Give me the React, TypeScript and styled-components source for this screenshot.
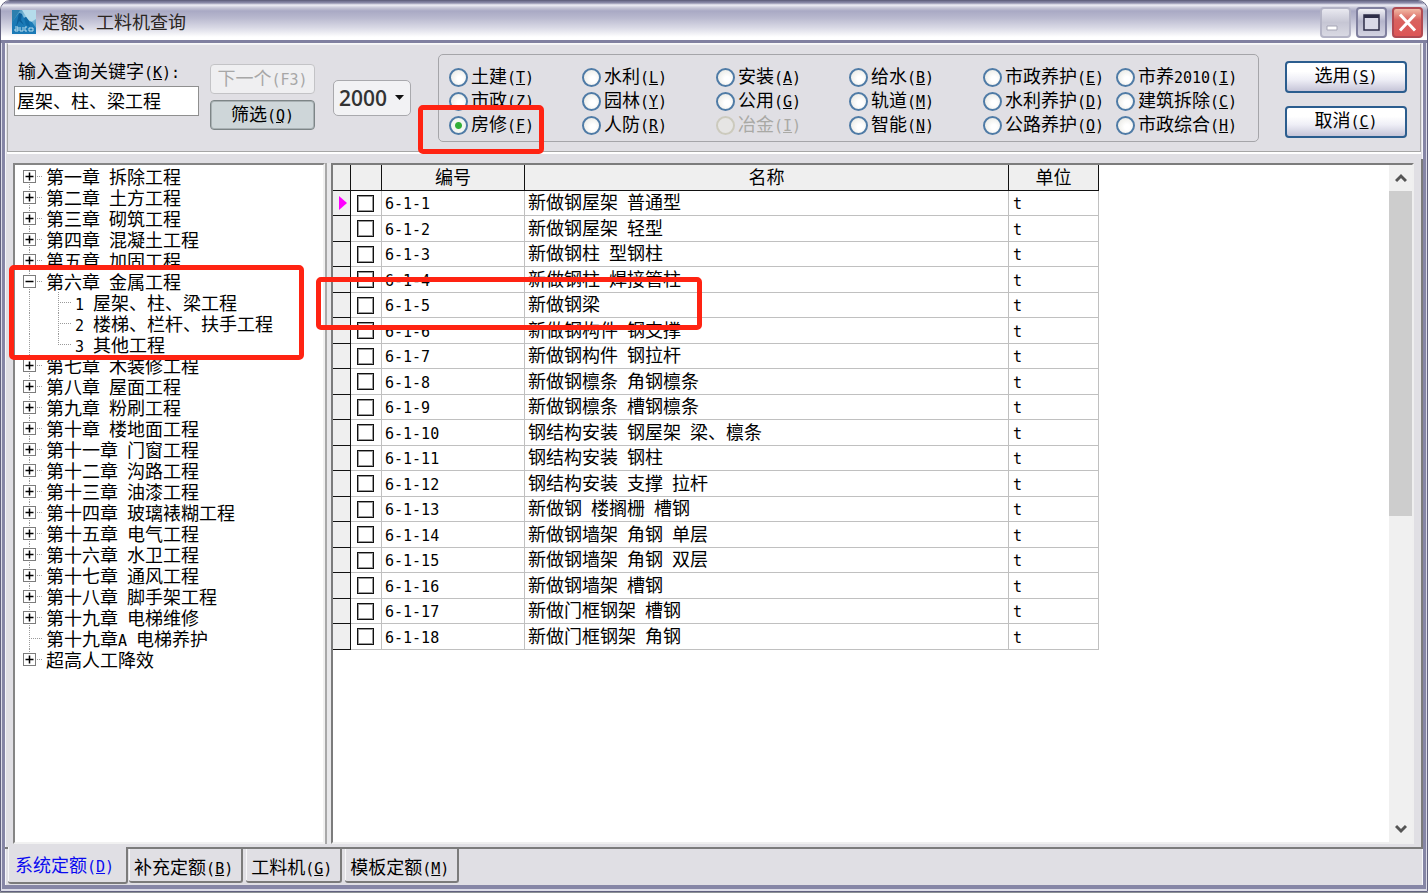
import React, { useState } from 'react';
import styled, { createGlobalStyle, css } from 'styled-components';

const GlobalStyle = createGlobalStyle`
  *, *::before, *::after { box-sizing: border-box; }
  body { margin: 0; background: #ffffff; }
  button, input, select { font: inherit; color: inherit; margin: 0; }
`;

const cjk = "'Liberation Mono', 'Noto Sans CJK SC', monospace";
const dots = '#9a9a9a';

/* ---------- text helpers ---------- */

const Text = styled.span`
  display: inline-block;
  padding-top: 3px;
  white-space: nowrap;
`;

const Half = styled.span`
  font-family: 'DejaVu Sans Mono', monospace;
  font-size: 15px;
  line-height: 15px;
  white-space: pre;
`;

/* Latin runs are set half as wide as the Chinese ones; "&X" underlines an access key. */
function Label({ text }: { text: string }) {
  const runs = text.match(/[\x20-\x7e]+|[^\x20-\x7e]+/g) ?? [];
  return (
    <Text>
      {runs.map((run, i) => {
        if (run.charCodeAt(0) > 0x7e) return <React.Fragment key={i}>{run}</React.Fragment>;
        const at = run.indexOf('&');
        if (at < 0) return <Half key={i}>{run}</Half>;
        return (
          <Half key={i}>
            {run.slice(0, at)}
            <u>{run[at + 1]}</u>
            {run.slice(at + 2)}
          </Half>
        );
      })}
    </Text>
  );
}

/* ---------- window frame ---------- */

const Page = styled.div`
  position: relative;
  display: flex;
  flex-direction: column;
  min-height: 100vh;
  font-family: ${cjk};
  font-size: 18px;
  line-height: 21px;
  color: #000;
`;

const Window = styled.main`
  flex: 1;
  display: flex;
  flex-direction: column;
  border: 1px solid #62627f;
  border-radius: 10px 10px 0 0;
  background: #dcdce8;
  overflow: hidden;
`;

const Desk = styled.div`
  height: 1px;
  background: #8d9196;
`;

const TitleBar = styled.header`
  display: flex;
  align-items: center;
  gap: 6px;
  height: 42px;
  padding: 3px 4px 0 11px;
  border-bottom: 3px solid #8080a0;
  background: linear-gradient(#6e6e8e 0, #8f8fac 2px, #eeeef6 4px, #c4c4d6 7px, #a9a9c4 10px, #b9b9cf 17px, #dadae6 27px, #ffffff 36px, #ffffff 39px);
`;

const Title = styled.h1`
  flex: 1;
  margin: 0;
  padding-top: 5px;
  font-size: 18px;
  font-weight: 400;
  line-height: 21px;
  color: #2b2622;
`;

const Controls = styled.div`
  display: flex;
  gap: 5px;
`;

const ControlButton = styled.button<{ $kind: 'min' | 'max' | 'close' }>`
  display: grid;
  place-items: center;
  width: 31px;
  height: 31px;
  padding: 0;
  border: 2px solid #7f7f9e;
  border-radius: 4px;
  background: linear-gradient(#f1f1f6, #b5b5cb 45%, #d4d4e2);
  ${(p) => p.$kind === 'min' && css`
    border-color: #b4b4c6;
    background: linear-gradient(#e9e9f0, #c6c6d4 50%, #d9d9e3);
  `}
  ${(p) => p.$kind === 'close' && css`
    border-color: #b04a52;
    background: linear-gradient(#f2b9a4, #d9635f 40%, #dd5555);
  `}
`;

const Body = styled.div`
  flex: 1;
  display: flex;
  flex-direction: column;
  margin: 0 1px 2px;
  border: solid #8686a6;
  border-width: 0 3px 4px;
  background: #e0dfe4;
  box-shadow: inset 1px 0 #f6f6fa, inset -1px 0 #f6f6fa;
`;

/* ---------- query panel ---------- */

const QueryPanel = styled.form`
  display: flex;
  align-items: flex-start;
  height: 109px;
  margin: 0 2px;
  padding: 10px 13px 0 6px;
  border: 1px solid #a6a6a6;
  border-top-color: #f8f8f8;
  box-shadow: inset 0 1px #f2f2f4, 0 2px #ffffff;
`;

const Keyword = styled.div`
  display: flex;
  flex-direction: column;
  width: 185px;
  margin-top: 6px;
`;

const KeywordLabel = styled.label`
  height: 21px;
  padding-left: 4px;
  margin-bottom: 5px;
`;

const KeywordInput = styled.input`
  width: 100%;
  height: 30px;
  padding: 0 2px 2px;
  border: 1px solid #8f8f8f;
  background: #fff;
  outline: 0;
`;

const Stack = styled.div`
  display: flex;
  flex-direction: column;
  gap: 6px;
  margin: 10px 0 0 11px;
`;

const ToolButton = styled.button`
  width: 105px;
  height: 30px;
  padding: 0;
  border: 1px solid #7d8587;
  border-radius: 4px;
  background: #ced6d9;
  box-shadow: inset 0 0 0 1px #a9b1b4;
  &:disabled {
    border-color: #c3c3c6;
    background: #efeff1;
    box-shadow: none;
    color: #a7a7a7;
  }
`;

const YearBox = styled.div`
  position: relative;
  width: 78px;
  margin: 26px 0 0 18px;
  svg { position: absolute; right: 7px; top: 15px; pointer-events: none; }
`;

const YearSelect = styled.select`
  display: block;
  appearance: none;
  width: 100%;
  height: 36px;
  padding: 0 0 0 5px;
  border: 1px solid #a9a9ad;
  border-radius: 5px;
  background: #f2f2f4;
  font-family: 'Open Sans', sans-serif;
  font-size: 21px;
  font-weight: 600;
  color: #333;
`;

const Group = styled.fieldset`
  display: grid;
  grid-template-columns: repeat(3, 133px 134px);
  grid-auto-rows: 24px;
  width: 821px;
  height: 88px;
  min-width: 0;
  margin: 0 0 0 27px;
  padding: 10px 0 0 10px;
  border: 1px solid #a5a5a9;
  border-radius: 5px;
`;

const Choice = styled.label<{ $off?: boolean }>`
  display: flex;
  align-items: center;
  gap: 3px;
  white-space: nowrap;
  color: ${(p) => (p.$off ? '#a9a9a5' : '#000')};
`;

const Radio = styled.input`
  appearance: none;
  width: 19px;
  height: 19px;
  flex: none;
  border: 2px solid #4f7ba6;
  border-radius: 50%;
  background: radial-gradient(circle at 60% 60%, #ffffff 20%, #e4e4de 100%);
  &:checked {
    background: radial-gradient(circle, #2fae35 0, #35b03a 3px, #f3f6f1 4px, #f5f5f2 100%);
  }
  &:disabled {
    border-color: #cccabd;
    background: #e6e5e4;
  }
`;

const Actions = styled.div`
  display: flex;
  flex-direction: column;
  gap: 13px;
  margin: 7px 0 0 auto;
`;

const ActionButton = styled.button`
  width: 122px;
  height: 32px;
  padding: 0 0 3px;
  border: 2px solid #2b5d8e;
  border-radius: 4px;
  background: linear-gradient(#ffffff 30%, #eeeef6 60%, #c6c5d8);
`;

/* ---------- tab page: tree and grid ---------- */

const Workspace = styled.section`
  flex: 1;
  display: flex;
  margin-top: 7px;
  padding: 4px 7px 3px 8px;
  border: solid #7b7b7b;
  border-width: 0 2px 2px 0;
`;

const TreePane = styled.nav`
  width: 312px;
  border: solid #f1f1f1;
  border-width: 2px;
  border-top-color: #858585;
  border-left-color: #858585;
  background: #fff;
`;

const Splitter = styled.div`
  width: 6px;
  border: solid #a8a8a8;
  border-width: 0 0 0 2px;
  background: #e8e8ea;
`;

const Tree = styled.ul`
  margin: 0;
  padding: 1px 0 0;
  list-style: none;
`;

const Node = styled.li`
  display: flex;
  height: 21px;
  white-space: nowrap;
`;

const Trunk = styled.span<{ $from: number; $length: number }>`
  flex: none;
  display: flex;
  align-items: center;
  width: 31px;
  padding-left: 8px;
  background:
    repeating-linear-gradient(${dots} 0 1px, transparent 1px 2px) 14px ${(p) => p.$from}px / 1px ${(p) => p.$length}px no-repeat,
    repeating-linear-gradient(90deg, ${dots} 0 1px, transparent 1px 2px) 14px 10px / 14px 1px no-repeat;
`;

const Branch = styled(Trunk)`
  width: 29px;
  background-position: 12px 0, 12px 10px;
`;

const PlainTrunk = styled(Trunk)`
  background-size: 1px 21px, 0 0;
`;

const Toggle = styled.button`
  display: grid;
  place-items: center;
  width: 13px;
  height: 13px;
  padding: 0;
  border: 1px solid #7c7c7c;
  background: #fff;
`;

const GridPane = styled.div`
  flex: 1;
  display: flex;
  min-width: 0;
  border: 2px solid #efefef;
  border-top-color: #7c7c7c;
  border-left-color: #7c7c7c;
  background: #fff;
`;

const GridArea = styled.div`
  flex: 1;
  min-width: 0;
`;

const Grid = styled.table`
  width: 766px;
  table-layout: fixed;
  border-collapse: separate;
  border-spacing: 0;
`;

const HeadCell = styled.th`
  height: 26px;
  padding: 3px 0 0;
  border: solid #111;
  border-width: 0 1px 1px 0;
  background: #efefef;
  font-weight: 400;
`;

const Row = styled.tr`
  height: 25px;
  &:nth-child(even) { height: 26px; }
`;

const Cell = styled.td`
  padding: 0 0 0 3px;
  border: solid #c0c0c0;
  border-width: 0 1px 1px 0;
  line-height: 21px;
  white-space: nowrap;
`;

const UnitCell = styled(Cell)`
  padding-left: 4px;
`;

const MarkCell = styled.td`
  padding: 0 0 0 5px;
  border: solid #111;
  border-width: 0 1px 1px 0;
  background: #efefef;
  svg { display: block; }
`;

const TickCell = styled(Cell)`
  padding-left: 6px;
`;

const Tick = styled.input`
  appearance: none;
  display: block;
  width: 17px;
  height: 17px;
  border: 1px solid #111;
  background: #fff;
  box-shadow: inset 0 0 0 1px #999;
  &:checked { background: #999; }
`;

const ScrollBar = styled.div`
  display: flex;
  flex-direction: column;
  width: 23px;
  background: #f0f0f0;
`;

const ScrollButton = styled.button`
  display: grid;
  place-items: center;
  height: 26px;
  padding: 0;
  border: 0;
  background: #f0f0f0;
`;

const ScrollTrack = styled.div`
  flex: 1;
`;

const ScrollThumb = styled.div`
  height: 52%;
  background: #cdcdcd;
`;

/* ---------- bottom tabs ---------- */

const Tabs = styled.div`
  display: flex;
  align-items: flex-start;
  gap: 3px;
  height: 36px;
  padding-left: 3px;
`;

const Tab = styled.button<{ $active: boolean }>`
  height: 34px;
  padding: 5px 8px 0 5px;
  border: solid #7b7b7b;
  border-width: 0 2px 2px 0;
  border-radius: 0 0 3px 3px;
  box-shadow: inset 1px 0 #f6f6f8;
  background: #e0dfe4;
  ${(p) => p.$active && css`
    height: 37px;
    margin: -2px -2px 0 0;
    padding: 3px 12px 0 7px;
    color: #0a0af0;
  `}
`;

const Highlight = styled.div<{ $x: number; $y: number; $w: number; $h: number }>`
  position: absolute;
  left: ${(p) => p.$x}px;
  top: ${(p) => p.$y}px;
  width: ${(p) => p.$w}px;
  height: ${(p) => p.$h}px;
  border: 5px solid #ff2312;
  border-radius: 5px;
  pointer-events: none;
`;

/* ---------- data ---------- */

const specialties: [string, string, string][] = [
  ['土建(&T)', '市政(&Z)', '房修(&F)'],
  ['水利(&L)', '园林(&Y)', '人防(&R)'],
  ['安装(&A)', '公用(&G)', '冶金(&I)'],
  ['给水(&B)', '轨道(&M)', '智能(&N)'],
  ['市政养护(&E)', '水利养护(&D)', '公路养护(&O)'],
  ['市养2010(&I)', '建筑拆除(&C)', '市政综合(&H)'],
];

type TreeNode = { text: string; kind: 'closed' | 'open' | 'leaf' | 'child' };

const closed = (text: string): TreeNode => ({ text, kind: 'closed' });

const nodes: TreeNode[] = [
  closed('第一章 拆除工程'),
  closed('第二章 土方工程'),
  closed('第三章 砌筑工程'),
  closed('第四章 混凝土工程'),
  closed('第五章 加固工程'),
  { text: '第六章 金属工程', kind: 'open' },
  { text: '1 屋架、柱、梁工程', kind: 'child' },
  { text: '2 楼梯、栏杆、扶手工程', kind: 'child' },
  { text: '3 其他工程', kind: 'child' },
  closed('第七章 木装修工程'),
  closed('第八章 屋面工程'),
  closed('第九章 粉刷工程'),
  closed('第十章 楼地面工程'),
  closed('第十一章 门窗工程'),
  closed('第十二章 沟路工程'),
  closed('第十三章 油漆工程'),
  closed('第十四章 玻璃裱糊工程'),
  closed('第十五章 电气工程'),
  closed('第十六章 水卫工程'),
  closed('第十七章 通风工程'),
  closed('第十八章 脚手架工程'),
  closed('第十九章 电梯维修'),
  { text: '第十九章A 电梯养护', kind: 'leaf' },
  closed('超高人工降效'),
];

const items = [
  '新做钢屋架 普通型', '新做钢屋架 轻型', '新做钢柱 型钢柱', '新做钢柱 焊接管柱', '新做钢梁',
  '新做钢构件 钢支撑', '新做钢构件 钢拉杆', '新做钢檩条 角钢檩条', '新做钢檩条 槽钢檩条',
  '钢结构安装 钢屋架 梁、檩条', '钢结构安装 钢柱', '钢结构安装 支撑 拉杆', '新做钢 楼搁栅 槽钢',
  '新做钢墙架 角钢 单层', '新做钢墙架 角钢 双层', '新做钢墙架 槽钢', '新做门框钢架 槽钢', '新做门框钢架 角钢',
];

const tabNames = ['系统定额(&D)', '补充定额(&B)', '工料机(&G)', '模板定额(&M)'];

/* ---------- drawings ---------- */

const AppIcon = () => (
  <svg width="24" height="24" viewBox="0 0 24 24" aria-hidden="true">
    <defs>
      <linearGradient id="sky" x1="0" y1="0" x2="1" y2="1">
        <stop offset="0" stopColor="#2f84b4" />
        <stop offset="0.5" stopColor="#9fd0e6" />
        <stop offset="1" stopColor="#2d86bb" />
      </linearGradient>
    </defs>
    <rect width="24" height="24" fill="url(#sky)" />
    <path d="M0 0h8L3 8 0 14z" fill="#2c7fae" />
    <path d="M10 0h14v9l-5 3-4-4z" fill="#b5dceb" />
    <path d="M0 24V13l3-5 4-5 3 1 2 4 2-1 3 4 3 1 4 6v6z" fill="#1b7ab6" />
    <path d="M7 3l3 1-1 6 3 5-5-4-3 6z" fill="#0d5f99" />
    <path d="M12 8l2 7 4 2-1-6-3-4z" fill="#0f6aa6" />
    <path d="M3 17h3v2H3v2h3v-2M8 17v4h3v-4M15 17h-2v4h2M17 18h4v3h-4z" fill="none" stroke="#b9dcec" strokeWidth="1" />
  </svg>
);

const Chevron = ({ up }: { up?: boolean }) => (
  <svg width="12" height="12" viewBox="0 0 12 12" aria-hidden="true">
    <path d={up ? 'M1 9l5-5 5 5' : 'M1 3l5 5 5-5'} fill="none" stroke="#555" strokeWidth="3" />
  </svg>
);

const Fold = ({ open }: { open: boolean }) => (
  <Toggle type="button" aria-label={open ? '折叠' : '展开'}>
    <svg width="9" height="9" viewBox="0 0 9 9" aria-hidden="true">
      <path d={open ? 'M.5 4.500h8' : 'M.5 4.500h8M4.500 .5v8'} stroke="#000" strokeWidth="1.500" />
    </svg>
  </Toggle>
);

function TreeRow({ node, first, last, lastChild }: { node: TreeNode; first: boolean; last: boolean; lastChild: boolean }) {
  if (node.kind === 'child') {
    return (
      <Node>
        <PlainTrunk $from={0} $length={21} />
        <Branch $from={0} $length={lastChild ? 11 : 21} />
        <Label text={node.text} />
      </Node>
    );
  }
  return (
    <Node>
      <Trunk $from={first ? 10 : 0} $length={last ? 11 : 21}>
        {node.kind !== 'leaf' && <Fold open={node.kind === 'open'} />}
      </Trunk>
      <Label text={node.text} />
    </Node>
  );
}

export default function App() {
  const [picked, setPicked] = useState('房修(&F)');
  const [tab, setTab] = useState(0);

  return (
    <Page>
      <GlobalStyle />
      <Window>
        <TitleBar>
          <AppIcon />
          <Title>定额、工料机查询</Title>
          <Controls>
            <ControlButton $kind="min" type="button" aria-label="最小化">
              <svg width="23" height="23" viewBox="0 0 23 23"><path d="M3 15h10v4H3z" fill="#fff" stroke="#a5a5b5" /></svg>
            </ControlButton>
            <ControlButton $kind="max" type="button" aria-label="最大化">
              <svg width="23" height="23" viewBox="0 0 23 23">
                <path d="M4 4h15v15H4z" fill="#d9d9e8" stroke="#2d2d48" strokeWidth="1.500" />
                <path d="M4 5.500h15" stroke="#2d2d48" strokeWidth="3" />
              </svg>
            </ControlButton>
            <ControlButton $kind="close" type="button" aria-label="关闭">
              <svg width="23" height="23" viewBox="0 0 23 23"><path d="M4 3.500l15 16M19 3.500l-15 16" stroke="#fff" strokeWidth="3" /></svg>
            </ControlButton>
          </Controls>
        </TitleBar>

        <Body>
          <QueryPanel onSubmit={(e) => e.preventDefault()}>
            <Keyword>
              <KeywordLabel htmlFor="keyword"><Label text="输入查询关键字(&K):" /></KeywordLabel>
              <KeywordInput id="keyword" defaultValue="屋架、柱、梁工程" />
            </Keyword>
            <Stack>
              <ToolButton type="button" disabled><Label text="下一个(F3)" /></ToolButton>
              <ToolButton type="button"><Label text="筛选(&Q)" /></ToolButton>
            </Stack>
            <YearBox>
              <YearSelect aria-label="定额年份" defaultValue="2000">
                <option>2000</option>
              </YearSelect>
              <svg width="9" height="6" viewBox="0 0 9 6" aria-hidden="true"><path d="M0 0h9L4.500 5z" fill="#111" /></svg>
            </YearBox>
            <Group>
              {[0, 1, 2].flatMap((line) =>
                specialties.map((column) => {
                  const name = column[line];
                  const off = name === '冶金(&I)';
                  return (
                    <Choice key={name} $off={off}>
                      <Radio
                        type="radio"
                        name="specialty"
                        disabled={off}
                        checked={picked === name}
                        onChange={() => setPicked(name)}
                      />
                      <Label text={name} />
                    </Choice>
                  );
                }),
              )}
            </Group>
            <Actions>
              <ActionButton type="button"><Label text="选用(&S)" /></ActionButton>
              <ActionButton type="button"><Label text="取消(&C)" /></ActionButton>
            </Actions>
          </QueryPanel>

          <Workspace>
            <TreePane>
              <Tree>
                {nodes.map((node, i) => (
                  <TreeRow
                    key={node.text}
                    node={node}
                    first={i === 0}
                    last={i === nodes.length - 1}
                    lastChild={nodes[i + 1]?.kind !== 'child'}
                  />
                ))}
              </Tree>
            </TreePane>
            <Splitter />
            <GridPane>
              <GridArea>
                <Grid>
                  <colgroup>
                    <col width="18" /><col width="31" /><col width="143" /><col width="484" /><col width="90" />
                  </colgroup>
                  <thead>
                    <tr>
                      <HeadCell /><HeadCell />
                      <HeadCell>编号</HeadCell><HeadCell>名称</HeadCell><HeadCell>单位</HeadCell>
                    </tr>
                  </thead>
                  <tbody>
                    {items.map((name, i) => (
                      <Row key={name}>
                        <MarkCell>
                          {i === 0 && (
                            <svg width="9" height="14" viewBox="0 0 9 14" aria-hidden="true"><path d="M1 0l8 7-8 7z" fill="#ff00ff" /></svg>
                          )}
                        </MarkCell>
                        <TickCell><Tick type="checkbox" aria-label={name} /></TickCell>
                        <Cell><Label text={`6-1-${i + 1}`} /></Cell>
                        <Cell><Label text={name} /></Cell>
                        <UnitCell><Label text="t" /></UnitCell>
                      </Row>
                    ))}
                  </tbody>
                </Grid>
              </GridArea>
              <ScrollBar>
                <ScrollButton type="button" aria-label="向上滚动"><Chevron up /></ScrollButton>
                <ScrollTrack><ScrollThumb /></ScrollTrack>
                <ScrollButton type="button" aria-label="向下滚动"><Chevron /></ScrollButton>
              </ScrollBar>
            </GridPane>
          </Workspace>

          <Tabs role="tablist">
            {tabNames.map((name, i) => (
              <Tab key={name} type="button" role="tab" aria-selected={tab === i} $active={tab === i} onClick={() => setTab(i)}>
                <Label text={name} />
              </Tab>
            ))}
          </Tabs>
        </Body>
      </Window>
      <Desk />
      <Highlight $x={418} $y={105} $w={126} $h={49} />
      <Highlight $x={9} $y={265} $w={295} $h={95} />
      <Highlight $x={316} $y={277} $w={386} $h={53} />
    </Page>
  );
}
